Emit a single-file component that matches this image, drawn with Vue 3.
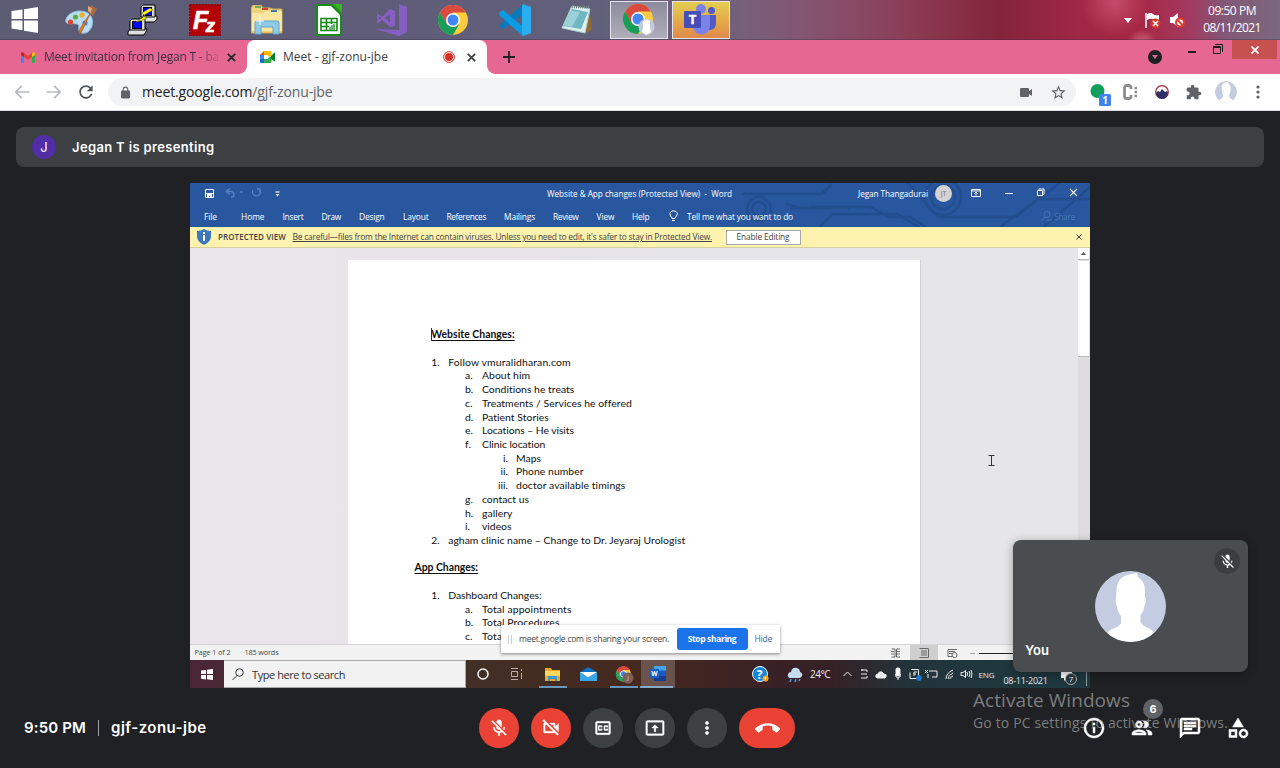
<script setup>
const setFit = (el, w) => {
  el.style.display = 'inline-block'
  el.style.flex = 'none'
  el.style.whiteSpace = 'nowrap'
  el.style.width = 'max-content'
  el.style.letterSpacing = '0px'
  const natural = el.getBoundingClientRect().width
  el.style.letterSpacing = (w - natural) / el.textContent.length + 'px'
  el.style.width = w + 'px'
}
// v-fit: tracks a label so that it fills the given width
const vFit = { mounted: (el, b) => setFit(el, b.value) }

const ribbon = [
  ['File', 13, 0], ['Home', 23.5, 24], ['Insert', 21, 18], ['Draw', 19.5, 18], ['Design', 25.5, 18],
  ['Layout', 25.5, 18.5], ['References', 39.5, 18], ['Mailings', 31, 18], ['Review', 25.5, 18],
  ['View', 18, 18], ['Help', 17.5, 17.5]
]
const lines = [
  ['h', '', 'Website Changes:', 83.5],
  ['e'],
  ['l1', '1.', 'Follow vmuralidharan.com', 122.5],
  ['l2', 'a.', 'About him', 48],
  ['l2', 'b.', 'Conditions he treats', 92.5],
  ['l2', 'c.', 'Treatments / Services he offered', 149.5],
  ['l2', 'd.', 'Patient Stories', 67],
  ['l2', 'e.', 'Locations – He visits', 92],
  ['l2', 'f.', 'Clinic location', 63.5],
  ['l3', 'i.', 'Maps', 25],
  ['l3', 'ii.', 'Phone number', 67.5],
  ['l3', 'iii.', 'doctor available timings', 109.5],
  ['l2', 'g.', 'contact us', 47],
  ['l2', 'h.', 'gallery', 30.5],
  ['l2', 'i.', 'videos', 29.5],
  ['l1', '2.', 'agham clinic name – Change to Dr. Jeyaraj Urologist', 237],
  ['e'],
  ['h out', '', 'App Changes:', 63.5],
  ['e'],
  ['l1', '1.', 'Dashboard Changes:', 93.5],
  ['l2', 'a.', 'Total appointments', 89.5],
  ['l2', 'b.', 'Total Procedures', 77.5],
  ['l2', 'c.', 'Total', 23]
]
const micOff = 'M19 11h-1.7c0 .74-.16 1.43-.43 2.05l1.23 1.23c.56-.98.9-2.09.9-3.28zm-4.02.17c0-.06.02-.11.02-.17V5c0-1.66-1.34-3-3-3S9 3.34 9 5v.18l5.98 5.99zM4.27 3L3 4.27l6.01 6.01V11c0 1.66 1.33 3 2.99 3 .22 0 .44-.03.65-.08l1.66 1.66c-.71.33-1.5.52-2.31.52-2.76 0-5.3-2.1-5.3-5.1H5c0 3.41 2.72 6.23 6 6.72V21h2v-3.28c.91-.13 1.77-.45 2.54-.9L19.73 21 21 19.73 4.27 3z'
const controls = [
  { red: true, d: micOff },
  { red: true, d: 'M9.56 8l-2-2-4.15-4.14L2 3.27 4.73 6H4c-.55 0-1 .45-1 1v10c0 .55.45 1 1 1h12c.21 0 .39-.08.55-.18L19.73 21l1.41-1.41-8.86-8.86L9.56 8zM5 16V8h1.73l8 8H5zm10-8v2.61l6 6V6.5l-4 4V7c0-.55-.45-1-1-1h-5.61l2 2H15z' },
  { d: 'M19 4H5c-1.11 0-2 .9-2 2v12c0 1.1.89 2 2 2h14c1.1 0 2-.9 2-2V6c0-1.1-.9-2-2-2zm0 14H5V6h14v12zM7 15h3c.55 0 1-.45 1-1v-1H9.5v.5h-2v-3h2v.5H11v-1c0-.55-.45-1-1-1H7c-.55 0-1 .45-1 1v4c0 .55.45 1 1 1zm7 0h3c.55 0 1-.45 1-1v-1h-1.5v.5h-2v-3h2v.5H18v-1c0-.55-.45-1-1-1h-3c-.55 0-1 .45-1 1v4c0 .55.45 1 1 1z' },
  { d: 'M21 3H3c-1.11 0-2 .89-2 2v14c0 1.11.89 2 2 2h18c1.11 0 2-.89 2-2V5c0-1.11-.89-2-2-2zm0 16H3V5h18v14zM11 16.500h2V12h3l-4-4-4 4h3z' },
  { d: 'M12 8c1.100 0 2-.9 2-2s-.9-2-2-2-2 .9-2 2 .9 2 2 2zm0 2c-1.100 0-2 .9-2 2s.9 2 2 2 2-.9 2-2-.9-2-2-2zm0 6c-1.100 0-2 .9-2 2s.9 2 2 2 2-.9 2-2-.9-2-2-2z' }
]
const side = [
  'M11 7h2v2h-2zm0 4h2v6h-2zm1-9C6.48 2 2 6.48 2 12s4.48 10 10 10 10-4.480 10-10S17.52 2 12 2zm0 18c-4.410 0-8-3.590-8-8s3.590-8 8-8 8 3.590 8 8-3.590 8-8 8z',
  'M9 13.75c-2.340 0-7 1.170-7 3.500V19h14v-1.750c0-2.330-4.660-3.500-7-3.500zM4.340 17c.84-.58 2.870-1.250 4.660-1.250s3.820.67 4.660 1.250H4.340zM9 12c1.930 0 3.500-1.570 3.500-3.500S10.930 5 9 5 5.500 6.570 5.500 8.500 7.070 12 9 12zm0-5c.83 0 1.500.67 1.500 1.500S9.830 10 9 10s-1.500-.67-1.500-1.500S8.170 7 9 7zm7.040 6.810c1.160.84 1.960 1.960 1.960 3.440V19h4v-1.750c0-2.020-3.500-3.170-5.960-3.440zM15 12c1.930 0 3.500-1.570 3.500-3.500S16.930 5 15 5c-.54 0-1.040.13-1.500.35.63.89 1 1.980 1 3.150s-.37 2.260-1 3.150c.46.22.96.35 1.500.35z',
  'M4 4h16v12H5.170L4 17.170V4m0-2c-1.100 0-1.990.9-1.990 2L2 22l4-4h14c1.100 0 2-.9 2-2V4c0-1.100-.9-2-2-2H4zm2 10h8v2H6v-2zm0-3h12v2H6V9zm0-3h12v2H6V6z',
  'M12 2L6.500 11h11zM3 13.500v8h8v-8zm2 2h4v4H5zM17.500 13a4.500 4.500 0 1 0 0 9 4.500 4.500 0 0 0 0-9zm0 2a2.500 2.500 0 1 1 0 5 2.500 2.500 0 0 1 0-5z'
]
</script>

<template>
  <div class="screen">
    <!-- desktop taskbar -->
    <header class="deskbar">
      <div class="task first">
        <svg width="28" height="26" viewBox="0 0 28 26"><path fill="#fff" d="M.5 4l11-1.600V12H.5zM13 2.200L27 0v12H13zM.5 13.500h11v9.700L.5 21.600zM13 13.500h14V26l-14-2.200z" /></svg>
      </div>
      <div class="task">
        <svg width="34" height="32" viewBox="0 0 34 32">
          <path fill="#b9ddf3" stroke="#88b9d9" d="M3 13C7 7 17 5 24 9c6 4 6 13 1 18-3 3-8 3-10 0-1-3 1-6-2-7-4-1-10 1-11-2-.5-2 0-3 1-5z" />
          <circle cx="6.500" cy="18" r="2.600" fill="#e04434" /><circle cx="11.500" cy="13" r="2.600" fill="#5fb040" /><circle cx="18" cy="11" r="2.600" fill="#eeb22c" /><circle cx="21" cy="19" r="2.600" fill="#3f85d6" />
          <path d="M27 8L19 25q-2 5-4 5 0-4 2-7z" fill="#dc7e28" stroke="#9d541c" stroke-width=".6" /><path d="M24 8l3-7 6 4-4 7z" fill="#a86c40" /><path d="M24 2l4 2-1 5-3-2z" fill="#dba877" />
        </svg>
      </div>
      <div class="task">
        <svg width="32" height="32" viewBox="0 0 32 32" stroke="#000">
          <path fill="#e0e0e0" d="M14 15l3-3h13v3l-3 3H14z" /><path fill="#d9d9d9" d="M16 1h12v12H14V3z" /><rect x="16.500" y="3.500" width="8" height="8" fill="#00f" />
          <path fill="#e0e0e0" d="M1 28l3-4h15l1 2-3 5H1z" /><path fill="#d9d9d9" d="M5 15h13v11H3V17z" /><rect x="5.500" y="17.500" width="9" height="7" fill="#00f" />
          <path d="M23 4l-8 5 3 3-9 6 10-3-2-4 9-5z" fill="#ff0" stroke="#776f00" stroke-width=".6" />
        </svg>
      </div>
      <div class="task">
        <svg width="32" height="32" viewBox="0 0 32 32"><rect x=".7" y=".7" width="30.600" height="30.600" fill="#b40004" stroke="#940006" stroke-width="1.400" stroke-dasharray="2 1" /><text x="4" y="25" fill="#fff" stroke="#fff" stroke-width=".6" font-family="Liberation Sans" font-size="25" font-weight="700" font-style="italic">F<tspan x="16.500" y="28" font-size="19">z</tspan></text></svg>
      </div>
      <div class="task">
        <svg width="32" height="30" viewBox="0 0 32 30"><path d="M0 3l2-3h8l2 3h8l2 1h9v24H0z" fill="#efd37b" stroke="#cda650" /><path d="M1 8h11l2-2h17v20H1z" fill="#fae6a0" /><path d="M4 2h6" stroke="#6dad5d" stroke-width="2" /><path d="M11 4h6" stroke="#d34837" stroke-width="2" /><path d="M20 6h6" stroke="#4279bc" stroke-width="2" /><path d="M4 29V18q0-2 2-2h20q2 0 2 2v11h-6v-7H10v7z" fill="#8ecae6" stroke="#60a8ce" /><path d="M9 11v9m-4-4h8" stroke="#fff" /></svg>
      </div>
      <div class="task">
        <svg width="26" height="32" viewBox="0 0 26 32"><path fill="#168b18" d="M0 0h17l9 9v23H0z" /><path fill="#fff" d="M2 2h13l9 9v19H2z" /><path fill="#34b51b" d="M17 0h9v9z" /><path d="M5 14.500h16v12H5zM5 18.500h16m-16 4h16M10.500 14.500v12m5-12v12" fill="none" stroke="#168b18" stroke-width="1.600" /><rect x="13" y="20" width="7" height="6" fill="#fff" /><path d="M14 26v-3m2 3v-5m2 5v-6" stroke="#168b18" stroke-width="1.300" /></svg>
      </div>
      <div class="task">
        <svg width="32" height="32" viewBox="0 0 32 32"><path fill="#865fc5" fill-rule="evenodd" d="M24 0l8 3v25l-8 4-24-7 24 1zM2 9l5 4 8-8 5 2v15l-5 1-8-7-5 4zM4 12v4l2-2zm11-2l-5 4 5 4z" /></svg>
      </div>
      <div class="task">
        <svg width="30" height="30" viewBox="0 0 30 30"><circle cx="15" cy="15" r="15" fill="#fccc3e" /><path fill="#da4a3e" d="M2 7.500A15 15 0 0 1 28 7.500H15L8.500 19z" /><path fill="#199d58" d="M2 7.500L8.600 18.800Q15 25 21.500 18.700L15 30A15 15 0 0 1 2 7.500z" /><circle cx="15" cy="15" r="7" fill="#fff" /><circle cx="15" cy="15" r="5.500" fill="#4386f5" /></svg>
      </div>
      <div class="task">
        <svg width="32" height="32" viewBox="0 0 32 32"><path fill="#0879bd" d="M24 0L2 20q-2 2 0 4l2 1q1 0 2-1L27 8z" /><path fill="#0a9be3" d="M24 32L0 11q-1-2 2-4l2-1 23 19z" /><path fill="#29aef0" d="M24 0l8 3v26l-8 3-1-2V2z" /></svg>
      </div>
      <div class="task">
        <svg width="32" height="30" viewBox="0 0 32 30"><path fill="#8f6a33" d="M28 2l3 22-7 5z" /><path fill="#def0ef" stroke="#a7cfcc" d="M11 1l18 3-5 24-23-5z" /><path fill="#55a8b8" d="M11 4l16 3-7 17-18-3z" opacity=".8" /><path fill="#b9e3e7" d="M11 6l8 1-8 15-9-2z" opacity=".6" /><path d="M11 2h18" stroke="#788" stroke-width="2.500" stroke-dasharray="1 1" /></svg>
      </div>
      <div class="task open">
        <svg width="32" height="32" viewBox="0 0 32 32"><circle cx="15" cy="15" r="15" fill="#fccc3e" /><path fill="#da4a3e" d="M2 7.500A15 15 0 0 1 28 7.500H15L8.500 19z" /><path fill="#199d58" d="M2 7.500L8.600 18.800Q15 25 21.500 18.700L15 30A15 15 0 0 1 2 7.500z" /><circle cx="15" cy="15" r="7" fill="#fff" /><circle cx="15" cy="15" r="5.500" fill="#4386f5" /><circle cx="23.500" cy="23" r="8" fill="#c2cadf" /><path fill="#fff" d="M20 17q3-3 7 0v7l1 4-4.500 3-4.500-3 1-4z" /></svg>
      </div>
      <div class="task open teams">
        <svg width="34" height="32" viewBox="0 0 34 32"><circle cx="27.500" cy="6.500" r="3.500" fill="#5059c9" /><circle cx="17" cy="5" r="5" fill="#7b83eb" /><path fill="#5059c9" d="M20 11h12v9q-1 6-7 6-4 0-5-4z" /><path fill="#7b83eb" d="M10 11h16v11q-1 8-8 8.500-8 0-9-8z" /><rect y="7" width="17" height="17" rx="1" fill="#464eb8" /><text x="8.500" y="20" text-anchor="middle" fill="#fff" stroke="#fff" stroke-width=".5" font-family="Open Sans" font-weight="700" font-size="13">T</text></svg>
      </div>
      <div class="tray">
        <svg width="8" height="5" viewBox="0 0 8 5"><path fill="#fff" d="M0 0h8L4 5z" /></svg>
        <svg width="17" height="17" viewBox="0 0 17 17"><path stroke="#fff" stroke-width="1.500" d="M2 1v15" /><path fill="#fff" d="M3 2q4-2 6 0t6 1v6q-4 0-6-1.500T3 8z" /><circle cx="11.500" cy="11.500" r="5" fill="#d8392f" /><path stroke="#fff" stroke-width="1.600" d="M9 9l5 5m0-5l-5 5" /></svg>
        <svg width="17" height="17" viewBox="0 0 17 17"><path fill="#fff" d="M1 5h3l5-4v14l-5-4H1z" /><circle cx="11" cy="10.500" r="4" fill="#fff" stroke="#e33b30" stroke-width="2" /><path stroke="#e33b30" stroke-width="2" d="M8 7.500l6 6" /></svg>
        <div class="clock"><span v-fit="48">09:50 PM</span><span v-fit="57.5">08/11/2021</span></div>
      </div>
    </header>

    <!-- browser tabs -->
    <div class="tabs">
      <svg class="gmail" width="14" height="11" viewBox="0 0 14 11"><path fill="#4285f4" d="M0 2l3 2v7H1q-1 0-1-1z" /><path fill="#34a853" d="M11 4l3-2v8q0 1-1 1h-2z" /><path fill="#ea4335" d="M3 1l4 3 4-3v4L7 8 3 5z" /><path fill="#c5221f" d="M0 2q0-3 3-1v4L0 3z" /><path fill="#fbbc04" d="M14 2q0-3-3-1v4l3-2z" /></svg>
      <span class="t1" v-fit="175">Meet invitation from Jegan T - ba</span>
      <svg class="x1" width="9" height="9" viewBox="0 0 9 9"><path d="M.8.800l7.400 7.400m0-7.400L.8 8.200" stroke="#22252a" stroke-width="1.800" /></svg>
      <div class="active">
        <svg width="15" height="12" viewBox="0 0 15 12"><path fill="#ea4335" d="M0 4l4-4v4z" /><path fill="#fbbc04" d="M4 0h6q1.500 0 1.500 1.500V6L8 5V4H4z" /><path fill="#4285f4" d="M0 4h4v4H0z" /><path fill="#1967d2" d="M0 8h4v4H1q-1 0-1-1z" /><path fill="#34a853" d="M4 8h4V7l3.500-2v6q0 1-1.500 1H4z" /><path fill="#00832d" d="M11 5l3-3q1-1 1 0v8q0 1-1 0l-3-2z" /><path fill="#fff" d="M4 4h4v4H4z" /></svg>
        <span v-fit="105">Meet - gjf-zonu-jbe</span>
        <svg class="rec" width="12" height="12" viewBox="0 0 12 12"><circle cx="6" cy="6" r="5.400" fill="#fff" stroke="#d93025" /><circle cx="6" cy="6" r="4" fill="#d93025" /></svg>
        <svg class="x2" width="9" height="9" viewBox="0 0 9 9"><path d="M.8.800l7.400 7.400m0-7.400L.8 8.200" stroke="#3c4043" stroke-width="1.700" /></svg>
      </div>
      <svg class="plus" width="12" height="12" viewBox="0 0 12 12"><path d="M6 0v12M0 6h12" stroke="#202124" stroke-width="1.800" /></svg>
      <div class="winbtns">
        <svg width="14" height="14" viewBox="0 0 14 14"><circle cx="7" cy="7" r="7" fill="#202124" /><path fill="#e66791" d="M4 5h6l-3 4z" /></svg>
        <svg class="wmin" width="8" height="2"><rect width="8" height="2" fill="#221c20" /></svg>
        <svg class="wres" width="10" height="10" viewBox="0 0 10 10"><path fill="none" stroke="#221c20" d="M.5 2.500h7v7h-7zM.5 3.500h7M2 .5h7.500V8" /></svg>
        <div class="wclose"><svg width="8" height="8" viewBox="0 0 8 8"><path d="M.5.500l7 7m0-7l-7 7" stroke="#fff" stroke-width="1.700" /></svg></div>
      </div>
    </div>

    <!-- browser toolbar -->
    <div class="toolbar">
      <svg class="back" width="20" height="20" viewBox="0 0 24 24"><path fill="#b8babd" d="M21 11H6.800l5.600-5.600L11 4l-8 8 8 8 1.400-1.400L6.800 13H21z" /></svg>
      <svg class="fwd" width="20" height="20" viewBox="0 0 24 24"><path fill="#b8babd" d="M3 11h14.200l-5.600-5.600L13 4l8 8-8 8-1.400-1.400 5.600-5.600H3z" /></svg>
      <svg class="reload" width="20" height="20" viewBox="0 0 24 24"><path fill="#505357" d="M17.650 6.350C16.200 4.900 14.210 4 12 4c-4.420 0-7.990 3.580-7.990 8s3.570 8 7.990 8c3.730 0 6.840-2.550 7.730-6h-2.080c-.82 2.330-3.040 4-5.650 4-3.310 0-6-2.690-6-6s2.690-6 6-6c1.660 0 3.140.69 4.220 1.780L13 11h7V4l-2.350 2.350z" /></svg>
      <div class="omni">
        <svg width="13" height="13" viewBox="3 0 18 23"><path fill="#5f6368" d="M18 8h-1V6c0-2.760-2.240-5-5-5S7 3.240 7 6v2H6c-1.100 0-2 .9-2 2v10c0 1.100.9 2 2 2h12c1.100 0 2-.9 2-2V10c0-1.100-.9-2-2-2zM9 6c0-1.660 1.340-3 3-3s3 1.340 3 3v2H9V6z" /></svg>
        <span class="url" v-fit="190.5">meet.google.com<i>/gjf-zonu-jbe</i></span>
        <svg class="cam" width="12" height="9" viewBox="0 0 12 9"><path fill="#5f6368" d="M0 1q0-1 1-1h7q1 0 1 1v2l3-2v7L9 6v2q0 1-1 1H1Q0 9 0 8z" /></svg>
        <svg class="star" width="17" height="17" viewBox="0 0 24 24"><path fill="#5f6368" d="M22 9.240l-7.190-.62L12 2 9.190 8.630 2 9.240l5.460 4.730L5.820 21 12 17.270 18.180 21l-1.630-7.030L22 9.240zM12 15.400l-3.760 2.270 1-4.280-3.320-2.880 4.380-.38L12 6.100l1.710 4.040 4.380.38-3.320 2.880 1 4.280L12 15.400z" /></svg>
      </div>
      <svg class="e1" width="22" height="24" viewBox="0 0 22 24"><circle cx="7.500" cy="8" r="7" fill="#12a05c" /><rect x="9" y="11" width="12" height="12" rx="1.500" fill="#3f83ee" /><text x="15" y="21" text-anchor="middle" font-family="Open Sans" font-weight="700" font-size="10" fill="#fff">1</text></svg>
      <svg class="e2" width="15" height="16" viewBox="0 0 15 16"><path fill="none" stroke="#8e8e8e" stroke-width="2.800" d="M8 5V3.500Q8 1.500 5.500 1.500H4Q1.500 1.500 1.500 4v8q0 2.500 2.500 2.500h1.500q2.500 0 2.500-2V11" /><path d="M11.500 4h2.500m-2.500 4h2.500m-2.500 4h2.500" stroke="#8e8e8e" stroke-width="2.400" /></svg>
      <svg class="e3" width="14" height="14" viewBox="0 0 14 14"><circle cx="7" cy="7" r="6.300" fill="#fff" stroke="#a62f45" stroke-width="1.300" /><path fill="#2d3166" d="M1 8l2-2 2 1 2-3 3 3 2-1 1 2a6 6 0 0 1-12 0z" /></svg>
      <svg class="e4" width="16" height="16" viewBox="1 0 23 23"><path fill="#5f6368" d="M20.500 11H19V7c0-1.100-.9-2-2-2h-4V3.500C13 2.120 11.880 1 10.500 1S8 2.120 8 3.500V5H4c-1.100 0-1.990.9-1.990 2v3.800H3.500c1.490 0 2.700 1.210 2.700 2.700s-1.210 2.700-2.700 2.700H2V20c0 1.100.9 2 2 2h3.800v-1.500c0-1.490 1.210-2.700 2.700-2.700 1.490 0 2.700 1.210 2.700 2.700V22H17c1.100 0 2-.9 2-2v-4h1.500c1.380 0 2.500-1.120 2.500-2.500S21.880 11 20.500 11z" /></svg>
      <svg class="e5" width="22" height="22" viewBox="0 0 71 71"><circle cx="35.500" cy="35.500" r="35.500" fill="#c3cce0" /><path fill="#fff" d="M22 14Q26 4 42 3l1 4q7 4 7 13v8q1 1 0 5l-4 12v7q2 4 13 10Q36 80 12 62q11-5 14-10v-7q-4-6-4-12-2-4 0-5z" /></svg>
      <svg class="e6" width="4" height="14" viewBox="0 0 4 14"><g fill="#5f6368"><circle cx="2" cy="2" r="1.600" /><circle cx="2" cy="7" r="1.600" /><circle cx="2" cy="12" r="1.600" /></g></svg>
    </div>

    <main class="meet">
      <div class="presenting"><span class="av">J</span><b v-fit="142.5">Jegan T is presenting</b></div>

      <section class="share">
        <div class="blue">
          <svg class="circuit" width="460" height="44" viewBox="0 0 460 44" fill="none" stroke="#1d4480" stroke-width="2.500" opacity=".5"><circle cx="129" cy="26" r="12" /><circle cx="129" cy="26" r="7" /><path d="M112 11h80l10-10M160 25h60M170 25l-14-4M190 44l12-13h65l22 13M180 24h60l20 10h20l16 10M278 0l30 34h78l22-18h52M370 44l60-44M414 44l46-40" /><circle cx="313" cy="14" r="18" /><circle cx="313" cy="14" r="12" /></svg>
          <div class="titlerow">
            <svg class="save" width="9" height="9" viewBox="0 0 9 9"><path fill="none" stroke="#fff" d="M.5.500h8v8h-8z" /><path stroke="#fff" d="M1 4.500h7" /><path fill="#fff" d="M2 5h5v4H5V7H4v2H2z" /></svg>
            <svg class="undo" width="56" height="10" viewBox="0 0 56 10" fill="none" stroke="#5481c1" stroke-width="1.300"><path d="M5 .5l-4 3 4 3M1 3.500h5q3 .5 3 3T6 9.500" /><path d="M15 4h3" /><path d="M32 1h3v3M35 2a4 4 0 1 1-7 0" /><path stroke="#fff" stroke-width="1.200" d="M50.500 4h4" /><path fill="#fff" stroke="none" d="M50.500 6h4l-2 2.500z" /></svg>
            <span class="doc" v-fit="185">Website &amp; App changes (Protected View) &nbsp;- &nbsp;Word</span>
            <span class="user" v-fit="70">Jegan Thangadurai</span>
            <span class="jt">JT</span>
            <svg class="wb" width="107" height="10" viewBox="0 0 107 10" fill="none" stroke="#fff"><path d="M.5 1.500h9v7h-9zM.5 3h9M5 7.500V4M3.500 5.500L5 4l1.500 1.500" /><path d="M34 5.500h8" /><path d="M66.500 2.500h5v5h-5zM68 2V1h5v5.500h-1" /><path d="M99 1l7 7m0-7l-7 7" stroke-width="1.100" /></svg>
          </div>
          <div class="ribbon">
            <span v-for="r in ribbon" :key="r[0]" :style="{ marginLeft: r[2] + 'px' }" v-fit="r[1]">{{ r[0] }}</span>
            <svg class="bulb" width="9" height="12" viewBox="0 0 9 12" fill="none" stroke="#fff"><path d="M3 8.500Q3 7 1.500 6 0 3 2 1.500t5 0T7.500 6Q6 7 6 8.500zM3 10.500h3" /></svg>
            <span v-fit="106">Tell me what you want to do</span>
            <svg class="person" width="11" height="10" viewBox="0 0 11 10" fill="none" stroke="#4774b5"><circle cx="6" cy="3.500" r="3" /><path d="M1 10Q2 6 5 6.500M6 9h5" /></svg>
            <span class="sh" v-fit="21">Share</span>
          </div>
        </div>

        <div class="yellow">
          <svg width="14" height="16" viewBox="0 0 14 16"><path fill="#3b78bd" d="M7 0q3 2 7 2v5q0 6-7 9-7-3-7-9V2q4 0 7-2z" /><path fill="#fff" d="M6 3h2v2H6zm0 3h2v6H6z" /></svg>
          <span class="pv" v-fit="68">PROTECTED VIEW</span>
          <u v-fit="419.5">Be careful—files from the Internet can contain viruses. Unless you need to edit, it's safer to stay in Protected View.</u>
          <div class="enable"><span v-fit="53">Enable Editing</span></div>
          <svg class="yx" width="6" height="6" viewBox="0 0 6 6"><path d="M.5.500l5 5m0-5l-5 5" stroke="#444" /></svg>
        </div>

        <div class="canvas">
          <div class="page">
            <div v-for="(l, i) in lines" :key="i" class="line" :class="l[0]">
              <template v-if="l[0] !== 'e'"><span v-if="l[1]" class="num">{{ l[1] }}</span><span class="txt" v-fit="l[3]">{{ l[2] }}</span></template>
            </div>
          </div>
          <div class="scroll"><div class="up"><svg width="5" height="3" viewBox="0 0 5 3"><path fill="#555" d="M0 3h5L2.500 0z" /></svg></div><div class="thumb"></div></div>
          <svg class="ibeam" width="7" height="11" viewBox="0 0 7 11"><path d="M.5.500h6m-6 10h6M3.500 0v11" stroke="#333" fill="none" /></svg>
        </div>

        <div class="status">
          <span v-fit="36">Page 1 of 2</span><span class="wc" v-fit="34">185 words</span>
          <svg width="126" height="15" viewBox="0 0 126 15" fill="none" stroke="#666"><rect x="19" y="0" width="28" height="15" fill="#cfcfcf" stroke="none" /><path d="M.5 4h3.500v8H.5M9 4H5.500v8H9M0 6.500h3m3 0h3M0 9h3m3 0h3" /><path d="M28.500 3.500h9v9h-9M30 6h6m-6 2h6m-6 2h6" /><path d="M66 4.500h-9v7h4m-3-5h6m-6 2h3" /><circle cx="63.500" cy="10" r="2.500" /><path d="M79 8.500h5" stroke="#aaa" /><path d="M88 8.500h38" stroke="#222" /></svg>
        </div>

        <div class="win10">
          <div class="start"><svg width="12" height="11" viewBox="0 0 12 11"><path fill="#fff" d="M0 1.500L5 1v4H0zM6 .8L12 0v5H6zM0 6h5v4.500L0 9.800zM6 6h6v5l-6-.7z" /></svg></div>
          <div class="search"><svg width="12" height="12" viewBox="0 0 12 12" fill="none" stroke="#333"><circle cx="7.500" cy="4.500" r="3.800" /><path d="M5 7.500L.5 12" /></svg><span v-fit="93">Type here to search</span></div>
          <svg class="apps" width="210" height="28" viewBox="0 0 210 28">
            <circle cx="17" cy="14" r="5" fill="none" stroke="#fff" stroke-width="1.500" />
            <path d="M45.500 11.500h6v5h-6zM45 8.500h7M45 19.500h7M55.500 9v2m0 2v6" fill="none" stroke="#b9aca8" />
            <path fill="#e9a922" d="M79 8h6l1 2h8v11H79z" /><path fill="#ffd65c" d="M79 11h15v5H79z" /><path fill="#3f91d8" d="M82 21v-5h9v5h-2v-2h-5v2z" /><path d="M73 27h28M144 27h28M174 27h33" stroke="#76b9ed" stroke-width="1.500" />
            <path fill="#0b6fc4" d="M114 12l8-5 9 5v9h-17z" /><path fill="#fff" d="M115 12h15l-8 5z" /><path fill="#35a8ec" d="M114 12l8 6 9-6v9h-17z" /><path fill="#fff" d="M114 12h17l-9 5.500z" />
            <circle cx="157.500" cy="14" r="7.500" fill="#fbc935" /><path fill="#db4638" d="M151 10a7.500 7.500 0 0 1 13 0h-6.500l-3 5.500z" /><path fill="#21a15b" d="M151 10l3.500 6h4l-1 5.500A7.500 7.500 0 0 1 151 10z" /><circle cx="157.500" cy="14" r="3.200" fill="#3f80ea" stroke="#fff" /><circle cx="162" cy="18" r="5.500" fill="#7c6058" /><text x="162" y="20" text-anchor="middle" fill="#ddd" font-size="6" font-family="Open Sans">J</text>
            <rect x="175" width="34" height="28" fill="#fff" opacity=".2" /><path fill="#2b7cd3" d="M188 7h12v5h-12z" /><path fill="#41a5ee" d="M188 6h12v4h-12z" /><path fill="#185abd" d="M188 11h12v5h-12z" /><path fill="#103f91" d="M188 16h12v5h-12z" /><path fill="#1b5cbe" d="M184 9h9v9h-9z" /><text x="188.500" y="16" text-anchor="middle" fill="#fff" font-size="6.500" font-weight="700" font-family="Open Sans">W</text>
          </svg>
          <svg class="weather" width="52" height="18" viewBox="0 0 52 18"><circle cx="8" cy="9" r="7.500" fill="#1684d8" stroke="#fff" /><text x="7.500" y="13.500" text-anchor="middle" fill="#fff" font-size="12" font-weight="700" font-family="Open Sans">?</text><circle cx="13.500" cy="13.500" r="3" fill="#f2a72c" /><path stroke="#fff" d="M13.500 12v3" /><path fill="#c6dcf1" d="M38 13q-3-1-2-4 1-2 3-2 1-5 6-4 3 1 3 4 3 1 2 4-1 2-3 2z" /><path d="M39 14l-1 3m6-3l-1 3m5-3l-1 2" stroke="#4aa1f1" stroke-width="1.500" /></svg>
          <span class="deg" v-fit="20">24°C</span>
          <svg class="icons" width="130" height="16" viewBox="0 0 130 16" fill="none" stroke="#eee"><path d="M.5 10l4-4 4 4" /><path d="M18 4h6v2m-6 2h6m-6 4h6v-2M19 3v2" /><path fill="#eee" d="M34 12q-2-1-1-3 1-1 2-1 1-3 4-2l2 2q3 0 2 3l-1 1z" /><rect x="53" y="2" width="4" height="8" rx="1.500" fill="#fff" /><path d="M52.500 8q0 4 2.500 4t2.500-4M55 12v2" /><path d="M68 3.500h7.500v9H67v-6M71 6h3m-3 2h2m-2-2v4" /><circle cx="76" cy="12" r="2.500" fill="#2774c9" stroke="#2774c9" /><path d="M82 4l3 3m0-3l-3 3m4-2h8v6h-5M85 8v4" /><path d="M103 13q0-6 7-9m-5 9q0-4 5-6m-3 6q0-2 3-3" /><path d="M118 6.500h2l2.500-2v7l-2.500-2h-2zM124 6q1 2 0 4m2-5q2 3 0 6m2-7q2 4 0 8" /></svg>
          <span class="eng" v-fit="16">ENG</span>
          <span class="date" v-fit="44">08-11-2021</span>
          <svg class="note" width="32" height="18" viewBox="0 0 32 18"><path fill="#fff" d="M0 2h11v8H6l-3 3v-3H0z" /><circle cx="10" cy="11" r="5.500" fill="#28373d" stroke="#aaa" /><text x="10" y="14" text-anchor="middle" font-family="Open Sans" font-size="8" fill="#fff">7</text><path stroke="#8a989c" d="M25.500 0v18" /></svg>
        </div>

        <div class="popup"><i></i><span v-fit="150">meet.google.com is sharing your screen.</span><div class="stop"><b v-fit="48.5">Stop sharing</b></div><span class="hide" v-fit="17.5">Hide</span></div>
      </section>

      <footer class="bottom">
        <div class="info"><b v-fit="62">9:50 PM</b><i></i><b v-fit="95.5">gjf-zonu-jbe</b></div>
        <div class="controls">
          <div v-for="(c, i) in controls" :key="i" class="ctl" :class="{ red: c.red }"><svg width="20" height="20" viewBox="0 0 24 24"><path fill="#fff" stroke="#fff" stroke-width=".4" :d="c.d" /></svg></div>
          <div class="ctl red end"><svg width="25" height="25" viewBox="0 0 24 24"><path fill="#fff" d="M12 9c-1.600 0-3.150.25-4.600.72v3.100c0 .39-.23.74-.56.9-.98.49-1.870 1.120-2.660 1.850-.18.18-.43.28-.7.28-.28 0-.53-.11-.71-.29L.29 13.080c-.18-.17-.29-.42-.29-.7 0-.28.11-.53.29-.71C3.340 8.780 7.460 7 12 7s8.660 1.780 11.710 4.670c.18.18.29.43.29.71 0 .28-.11.53-.29.71l-2.480 2.480c-.18.18-.43.29-.71.29-.27 0-.52-.11-.7-.28-.79-.74-1.690-1.360-2.670-1.850-.33-.16-.56-.5-.56-.9v-3.100C15.150 9.250 13.600 9 12 9z" /></svg></div>
        </div>
        <div class="side"><svg v-for="d in side" :key="d" width="24" height="24" viewBox="0 0 24 24"><path fill="#fff" stroke="#fff" stroke-width=".5" :d="d" /></svg></div>
        <span class="count">6</span>
      </footer>

      <div class="you">
        <div class="mute"><svg width="17" height="17" viewBox="0 0 24 24"><path fill="#fff" :d="micOff" /></svg></div>
        <svg class="face" width="71" height="71" viewBox="0 0 71 71"><defs><clipPath id="face"><circle cx="35.500" cy="35.500" r="35.500" /></clipPath></defs><g clip-path="url(#face)"><path fill="#c3cce0" d="M0 0h71v71H0z" /><path fill="#fff" d="M21.500 20Q22 6 33 4q4-1.500 9-2l1 4q7 4 7 14v7q2 1 .5 5l-1 3q-1 6-4 9v7q2 4 9 6.500Q61 61 64 75H7Q10 62 16 58.500q9-3 10-6.500v-7q-4-5-4-10-2-3-1-8z" /></g></svg>
        <b v-fit="24">You</b>
      </div>

      <div class="watermark"><span class="w1" v-fit="157">Activate Windows</span><span class="w2" v-fit="255">Go to PC settings to activate Windows.</span></div>
    </main>
  </div>
</template>

<style>
html, body { margin: 0; background: #202124; overflow: hidden; }
</style>
<style scoped>
* { box-sizing: border-box; }
svg { display: block; flex: none; }
.screen { width: 1280px; height: 768px; overflow: hidden; font-family: "Open Sans", "Noto Sans", sans-serif; display: flex; flex-direction: column; }
.deskbar { height: 40px; flex: none; display: flex; align-items: center; box-shadow: inset 0 -1px rgba(50,40,60,.35);
  background: radial-gradient(ellipse 34px 34px at 1115px 2px, rgba(205,85,115,.8), transparent), radial-gradient(circle 15px at 1142px 44px, rgba(225,125,145,.8), transparent), linear-gradient(90deg, #5c5c75 0, #5f5c77 380px, #61607a 600px, #76607a 745px, #835672 800px, #8c3f58 900px, #84243a 1000px, #a02745 1080px, #a52745 1140px, #a33a60 1190px, #825876 1225px, #7c6880 1280px); }
.task { width: 62px; height: 40px; display: flex; align-items: center; justify-content: center; flex: none; }
.first { width: 50px; }
.open { width: 58px; height: 38px; border: 1px solid #e7e4ee; background: linear-gradient(#8c8b9e, #b0aeba); margin: 0 2px; }
.teams { background: linear-gradient(#e2ce50, #e5a446 60%, #de8a4c); }
.tray { margin-left: auto; width: 156px; display: flex; align-items: center; }
.tray svg:nth-child(2) { margin-left: 12px; }
.tray svg:nth-child(3) { margin-left: 8px; }
.clock { margin: -2px 8px 0 auto; width: 80px; display: flex; flex-direction: column; align-items: center; color: #fff; font-size: 12px; line-height: 17px; }
.tabs { height: 34px; flex: none; background: #e66791; display: flex; align-items: center; font-size: 12px; color: #3c3040; }
.tabs span { margin-top: -1px; }
.gmail { margin-left: 21px; }
.t1 { margin-left: 9px; -webkit-mask-image: linear-gradient(90deg, #000 150px, transparent 180px); mask-image: linear-gradient(90deg, #000 150px, transparent 180px); }
.x1 { margin-left: 8px; }
.active { position: relative; width: 240px; height: 34px; margin-left: 11px; background: #fff; border-radius: 8px 8px 0 0; display: flex; align-items: center; padding-left: 13px; color: #3c4043; }
.active::before, .active::after { content: ""; position: absolute; bottom: 0; width: 8px; height: 8px; }
.active::before { left: -8px; background: radial-gradient(circle at 0 0, transparent 7.500px, #fff 8px); }
.active::after { right: -8px; background: radial-gradient(circle at 100% 0, transparent 7.500px, #fff 8px); }
.active span { margin-left: 8px; }
.rec { margin-left: 55px; }
.x2 { margin-left: 12px; }
.plus { margin-left: 16px; }
.winbtns { margin-left: auto; height: 34px; display: flex; align-items: flex-start; }
.winbtns > svg:first-child { margin-top: 10px; }
.wmin { margin: 11px 0 0 26px; }
.wres { margin: 4px 0 0 17px; }
.wclose { margin-left: 9px; margin-right: 3px; width: 45px; height: 19px; background: #c75050; display: flex; align-items: center; justify-content: center; }
.toolbar { height: 37px; flex: none; background: #fff; border-bottom: 1px solid #dadce0; display: flex; align-items: center; }
.back { margin-left: 12px; }
.fwd { margin-left: 12px; }
.reload { margin-left: 12px; }
.omni { margin-left: 12px; width: 968px; height: 28px; border-radius: 14px; background: #f1f3f4; display: flex; align-items: center; padding-left: 11px; font-size: 14px; color: #202124; }
.url { margin-left: 10px; line-height: 20px; }
.url i { font-style: normal; color: #5f6368; }
.cam { margin-left: 687px; }
.star { margin-left: 18px; }
.e1 { margin: 6px 0 0 14px; }
.e2 { margin-left: 11px; }
.e3 { margin-left: 17px; }
.e4 { margin-left: 17px; }
.e5 { margin-left: 13px; border-radius: 50%; }
.e6 { margin-left: 19px; }
.meet { position: relative; height: 657px; background: #202124; padding-top: 16px; }
.presenting { height: 40px; margin: 0 16px; background: #3c4043; border-radius: 8px; display: flex; align-items: center; padding-left: 16px; color: #fff; font: 600 13px Inter, sans-serif; }
.presenting b { margin: -1px 0 0 16px; font-weight: 600; }
.av { width: 24px; height: 24px; border-radius: 50%; background: #512da8; text-align: center; font: 13px/25px Inter, sans-serif; }
.share { position: relative; margin: 16px 190px 0; width: 900px; height: 505px; display: flex; flex-direction: column; font-size: 8px; }
.blue { height: 44px; position: relative; background: #2857a0; color: #fff; flex: none; overflow: hidden; }
.circuit { position: absolute; right: 0; top: 0; }
.titlerow, .ribbon { position: relative; display: flex; align-items: center; }
.titlerow { height: 20px; font-size: 8.200px; }
.ribbon { height: 26px; padding-left: 14px; font-size: 8.400px; }
.save { margin: 1px 0 0 15px; }
.undo { margin-left: 11px; }
.doc { margin-left: 266px; }
.user { margin-left: 126px; }
.jt { margin-left: 7px; width: 17px; height: 17px; border-radius: 50%; background: #d4d2d3; color: #777; font-size: 7px; line-height: 17px; text-align: center; }
.wb { margin-left: 19px; }
.bulb { margin: 0 9px 0 19.500px; }
.person { margin-left: 248px; }
.sh { margin-left: 2px; color: #4774b5; }
.yellow { height: 21px; flex: none; background: #fdf2ae; border-bottom: 1px solid #d8d0a0; display: flex; align-items: center; padding-left: 7px; color: #444; }
.yellow span, .yellow u { margin-top: -1px; }
.pv { margin-left: 7px; font-weight: 600; }
.yellow u { margin-left: 6.500px; text-underline-offset: 1px; font-size: 8.400px; }
.enable { margin-left: 13.500px; width: 75px; height: 15px; border: 1px solid #aaa; background: #fff; display: flex; align-items: center; justify-content: center; font-size: 8.400px; }
.yx { margin-left: 275.500px; }
.canvas { position: relative; height: 396px; flex: none; overflow: hidden; display: flex; background: linear-gradient(90deg, #e9e5ea, #e6e5e8 60%, #e6e6e8); }
.page { margin: 12px 0 0 158px; width: 573px; height: 390px; background: #fff; padding-top: 68.200px; color: #101010; font: 10.400px/13.730px Lato, sans-serif; border-right: 1px solid #d2d0d4; }
.line { height: 13.730px; display: flex; padding-left: 83.200px; }
.h { font-weight: 700; }
.h .txt { text-decoration: underline; text-underline-offset: 1.500px; }
.line:first-child .txt { background: linear-gradient(#333, #333) 0 0 / 1px 12px no-repeat; }
.out { padding-left: 66.500px; }
.num { width: 17px; flex: none; }
.l2 { padding-left: 117px; }
.l3 { padding-left: 139px; }
.l3 .num { width: 21px; text-align: right; margin-right: 8px; }
.scroll { margin-left: auto; width: 12px; height: 396px; background: #dedcdf; padding-right: 1px; }
.up { height: 12px; background: #fff; border-bottom: 1px solid #bbb; display: flex; align-items: center; justify-content: center; }
.thumb { margin-top: 1px; height: 96px; background: #fff; border-bottom: 1px solid #bbb; }
.ibeam { position: absolute; left: 798px; top: 207px; }
.status { height: 16px; flex: none; background: #f3f2f3; border-top: 1px solid #d5d3d6; display: flex; align-items: center; padding-left: 4.500px; color: #444; font-size: 7.200px; }
.status span { margin-top: -1px; }
.wc { margin-left: 14px; }
.status svg { margin-left: 612.500px; }
.win10 { height: 28px; flex: none; display: flex; align-items: center; color: #eee; background: linear-gradient(90deg, #4a2635, #412f25 280px, #46291f 450px, #382126 590px, #352125 640px, #22343b 720px, #1e3940 900px); font-size: 9px; }
.start { width: 34px; display: flex; justify-content: center; flex: none; }
.search { width: 242px; flex: none; height: 28px; background: #f2f2f2; border: 1px solid #aaa; border-left: 0; color: #333; display: flex; align-items: center; padding-left: 8px; font-size: 11px; }
.search span { margin-left: 8px; }
.apps { margin-left: 0; }
.weather { margin-left: 76px; }
.deg { margin-left: 6px; font-size: 10px; }
.icons { margin-left: 13px; }
.eng { margin-left: 5.500px; font-size: 8px; }
.date { margin: 13px 0 0 9px; }
.note { margin: 5px 0 0 13px; }
.popup { position: absolute; left: 311px; top: 442px; width: 279px; height: 28px; background: #fff; box-shadow: 0 1px 3px rgba(0,0,0,.45); display: flex; align-items: center; color: #444; font-size: 8.500px; }
.popup > span, .popup b { margin-top: -1px; }
.popup i { margin-left: 7px; width: 4px; height: 9px; border: 1px solid #ccc; border-width: 0 1px; }
.popup > span:nth-child(2) { margin-left: 7px; }
.stop { margin-left: 7.500px; width: 71px; height: 22px; background: #1a73e8; border-radius: 3px; color: #fff; display: flex; align-items: center; justify-content: center; }
.popup .hide { margin-left: 7px; color: #3567ad; }
.bottom { position: relative; height: 80px; display: flex; align-items: center; color: #fff; font: 600 15px Inter, sans-serif; }
.info { width: 479px; padding-left: 24px; display: flex; align-items: center; }
.info b { font-weight: 600; margin-top: -1px; }
.info i { width: 1px; height: 16px; background: #9aa0a6; margin: 0 12px; }
.controls { display: flex; gap: 12px; }
.ctl { width: 40px; height: 40px; border-radius: 20px; background: #3c4043; display: flex; align-items: center; justify-content: center; }
.red { background: #ea4335; }
.end { width: 56px; }
.side { margin-left: auto; margin-right: 30px; display: flex; gap: 24px; }
.count { position: absolute; left: 1143px; top: 11px; width: 20px; height: 20px; border-radius: 50%; background: #5f6368; text-align: center; font: 700 11px/20px Inter, sans-serif; }
.you { position: absolute; left: 1013px; top: 429px; width: 235px; height: 132px; border-radius: 8px; background: #4a4d50; box-shadow: 0 2px 10px rgba(0,0,0,.35); display: flex; align-items: center; justify-content: center; color: #fff; }
.mute { position: absolute; right: 8px; top: 8px; width: 26px; height: 26px; border-radius: 50%; background: #3b3e41; display: flex; align-items: center; justify-content: center; }
.you b { position: absolute; left: 12px; bottom: 13px; font: 600 13px/17px Inter, sans-serif; }
.watermark { position: absolute; left: 973px; top: 576px; color: rgba(190,190,190,.6); display: flex; flex-direction: column; align-items: flex-start; }
.w1 { font-size: 19px; line-height: 26px; }
.w2 { font-size: 14px; line-height: 20px; }
</style>
